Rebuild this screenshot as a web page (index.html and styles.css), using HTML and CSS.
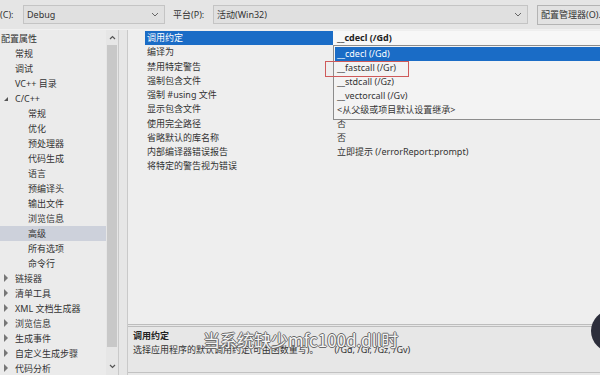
FILE: index.html
```html
<!DOCTYPE html>
<html lang="zh-CN">
<head>
    <meta charset="UTF-8">
    <meta name="viewport" content="width=device-width, initial-scale=1.0">
    <title>属性页</title>
    <link rel="stylesheet" href="styles.css">
</head>
<body>
    <div class="toolbar">
        <span class="lbl lbl-cfg">(C):</span>
        <div class="combo combo-cfg">
            <span>Debug</span>
            <svg class="chev" width="8" height="5" viewBox="0 0 8 5"><path d="M1 1l3 3 3-3" fill="none" stroke="#666" stroke-width="1"/></svg>
        </div>
        <span class="lbl lbl-plat">平台(P):</span>
        <div class="combo combo-plat">
            <span>活动(Win32)</span>
            <svg class="chev" width="8" height="5" viewBox="0 0 8 5"><path d="M1 1l3 3 3-3" fill="none" stroke="#666" stroke-width="1"/></svg>
        </div>
        <button class="btn">配置管理器(O)...</button>
    </div>

    <div class="main">
        <div class="tree">
            <ul class="tree-list">
                <li class="node lv0">配置属性</li>
                <li class="node lv1">常规</li>
                <li class="node lv1">调试</li>
                <li class="node lv1">VC++ 目录</li>
                <li class="node lv1 open"><span class="tri-open"></span>C/C++</li>
                <li class="node lv2">常规</li>
                <li class="node lv2">优化</li>
                <li class="node lv2">预处理器</li>
                <li class="node lv2">代码生成</li>
                <li class="node lv2">语言</li>
                <li class="node lv2">预编译头</li>
                <li class="node lv2">输出文件</li>
                <li class="node lv2">浏览信息</li>
                <li class="node lv2 selected">高级</li>
                <li class="node lv2">所有选项</li>
                <li class="node lv2">命令行</li>
                <li class="node lv1"><span class="tri-closed"></span>链接器</li>
                <li class="node lv1"><span class="tri-closed"></span>清单工具</li>
                <li class="node lv1"><span class="tri-closed"></span>XML 文档生成器</li>
                <li class="node lv1"><span class="tri-closed"></span>浏览信息</li>
                <li class="node lv1"><span class="tri-closed"></span>生成事件</li>
                <li class="node lv1"><span class="tri-closed"></span>自定义生成步骤</li>
                <li class="node lv1"><span class="tri-closed"></span>代码分析</li>
            </ul>
            <div class="scrollbar">
                <div class="sb-arrow">
                    <svg width="7" height="5" viewBox="0 0 7 5"><path d="M1 4l2.5-2.5L6 4" fill="none" stroke="#555" stroke-width="1.2"/></svg>
                </div>
                <div class="sb-thumb"></div>
                <div class="sb-arrow sb-down">
                    <svg width="7" height="5" viewBox="0 0 7 5"><path d="M1 1l2.5 2.5L6 1" fill="none" stroke="#555" stroke-width="1.2"/></svg>
                </div>
            </div>
        </div>
        <div class="splitter"></div>
        <div class="props">
            <div class="grid">
                <div class="row active">
                    <span class="name">调用约定</span>
                    <span class="value edit">__cdecl (/Gd)</span>
                </div>
                <div class="row"><span class="name">编译为</span><span class="value"></span></div>
                <div class="row"><span class="name">禁用特定警告</span><span class="value"></span></div>
                <div class="row"><span class="name">强制包含文件</span><span class="value"></span></div>
                <div class="row"><span class="name">强制 #using 文件</span><span class="value"></span></div>
                <div class="row"><span class="name">显示包含文件</span><span class="value"></span></div>
                <div class="row"><span class="name">使用完全路径</span><span class="value">否</span></div>
                <div class="row"><span class="name">省略默认的库名称</span><span class="value">否</span></div>
                <div class="row"><span class="name">内部编译器错误报告</span><span class="value">立即提示 (/errorReport:prompt)</span></div>
                <div class="row"><span class="name">将特定的警告视为错误</span><span class="value"></span></div>

                <ul class="dropdown">
                    <li class="opt hl">__cdecl (/Gd)</li>
                    <li class="opt">__fastcall (/Gr)</li>
                    <li class="opt">__stdcall (/Gz)</li>
                    <li class="opt">__vectorcall (/Gv)</li>
                    <li class="opt">&lt;从父级或项目默认设置继承&gt;</li>
                </ul>
                <div class="mark"></div>
            </div>
            <div class="desc">
                <div class="desc-title">调用约定</div>
                <div class="desc-text">选择应用程序的默认调用约定(可由函数重写)。<span class="desc-flags">(/Gd, /Gr, /Gz, /Gv)</span></div>
            </div>
        </div>
    </div>

    <div class="subtitle">当系统缺少mfc100d.dll时</div>
    <div class="blob"></div>
</body>
</html>
```

FILE: styles.css
```css
body {
    margin: 0;
    width: 600px;
    height: 375px;
    overflow: hidden;
    position: relative;
    background: #e8e8e8;
    font-family: "Noto Sans", "Noto Sans CJK SC", sans-serif;
    font-size: 9px;
    color: #333;
}

ul {
    list-style: none;
    margin: 0;
    padding: 0;
}

/* top bar */
.toolbar {
    display: flex;
    align-items: center;
    height: 29px;
    border-bottom: 1px solid #f1f1f1;
    background: #e5e5e5;
    white-space: nowrap;
    overflow: hidden;
}

.lbl,
.combo {
    flex: none;
}

.lbl-cfg {
    width: 23px;
}

.lbl-plat {
    width: 40px;
    margin-left: 8px;
}

.combo {
    display: flex;
    align-items: center;
    justify-content: space-between;
    box-sizing: border-box;
    height: 19px;
    padding: 0 5px 0 3px;
    border: 1px solid #c4c4c4;
    background: #e0e0e0;
}

.combo-cfg {
    width: 142px;
}

.combo-plat {
    width: 315px;
}

.btn {
    flex: none;
    margin-left: 9px;
    height: 20px;
    padding: 0 3px;
    border: 1px solid #b4b4b4;
    background: #e2e2e2;
    font: inherit;
    color: #333;
    white-space: nowrap;
}

/* body */
.main {
    display: flex;
    height: 345px;
}

.tree {
    display: flex;
    width: 118px;
    border-right: 1px solid #c9c9c9;
    background: #ebebeb;
}

.tree-list {
    width: 106px;
    padding-top: 1px;
    overflow: hidden;
}

.node {
    position: relative;
    height: 15px;
    line-height: 15px;
    white-space: nowrap;
}

.lv0 {
    padding-left: 1px;
}

.lv1 {
    padding-left: 15px;
}

.lv2 {
    padding-left: 28px;
}

.selected {
    background: #cdd1db;
}

.tri-open {
    position: absolute;
    left: 4px;
    top: 6px;
    width: 0;
    height: 0;
    border-left: 4px solid transparent;
    border-bottom: 4px solid #555;
}

.tri-closed {
    position: absolute;
    left: 4px;
    top: 4px;
    width: 4px;
    height: 6px;
    box-sizing: border-box;
    border-left: 1px solid #777;
}

.tri-closed::after {
    content: "";
    position: absolute;
    left: -1px;
    top: -1px;
    border-top: 4px solid transparent;
    border-bottom: 4px solid transparent;
    border-left: 4px solid #777;
}

.scrollbar {
    display: flex;
    flex-direction: column;
    align-items: center;
    width: 12px;
    background: #e6e6e6;
}

.sb-arrow {
    display: flex;
    align-items: center;
    justify-content: center;
    height: 15px;
}

.sb-thumb {
    width: 10px;
    height: 302px;
    background: #c8c8c8;
}

.sb-down {
    margin-top: auto;
    height: 18px;
}

.splitter {
    width: 8px;
    border-right: 1px solid #c9c9c9;
    background: #e6e6e6;
}

.props {
    flex: 1;
    display: flex;
    flex-direction: column;
    min-width: 0;
}

.grid {
    position: relative;
    flex: 1;
    padding-top: 1px;
    background: #eeeeee;
    overflow: hidden;
}

.row {
    display: flex;
    height: 14.25px;
    line-height: 14.25px;
    padding-left: 17px;
    white-space: nowrap;
}

.name {
    width: 186px;
    padding-left: 2px;
}

.value {
    flex: 1;
    padding-left: 4px;
}

.active .name {
    background: #1a6cc6;
    color: #fff;
}

.edit {
    background: #f7f7f7;
    font-weight: bold;
    color: #222;
}

.dropdown {
    position: absolute;
    left: 205px;
    top: 15px;
    width: 266px;
    height: 72px;
    border: 1px solid #8c8c8c;
    border-right: none;
    background: #f3f3f3;
    padding-top: 1px;
}

.opt {
    height: 14px;
    line-height: 14px;
    padding-left: 3px;
    white-space: nowrap;
    color: #333;
}

.opt.hl {
    margin-left: 1px;
    padding-left: 2px;
    background: #1a6cc6;
    color: #fff;
}

.mark {
    position: absolute;
    left: 197px;
    top: 31px;
    width: 82px;
    height: 14px;
    border: 1px solid #cf5a5a;
}

.desc {
    height: 43px;
    margin-bottom: 2px;
    padding: 2px 5px 0;
    border-top: 3px double #bdbdbd;
    border-bottom: 1px solid #c2c2c2;
    background: #e7e7e7;
    line-height: 14px;
    white-space: nowrap;
}

.desc-title {
    font-weight: bold;
    color: #222;
}

.desc-flags {
    margin-left: 16px;
}

/* overlays from the video frame */
.subtitle {
    position: absolute;
    left: 203px;
    top: 329px;
    font-family: "Noto Sans CJK SC", sans-serif;
    font-size: 17px;
    line-height: 22px;
    color: #f5f5f5;
    text-shadow: 1px 0 #6a6a6a, -1px 0 #6a6a6a, 0 1px #6a6a6a, 0 -1px #6a6a6a;
    white-space: nowrap;
}

.blob {
    position: absolute;
    left: 591px;
    top: 310px;
    width: 42px;
    height: 42px;
    border-radius: 50%;
    background: #2c2e3b;
}
```
